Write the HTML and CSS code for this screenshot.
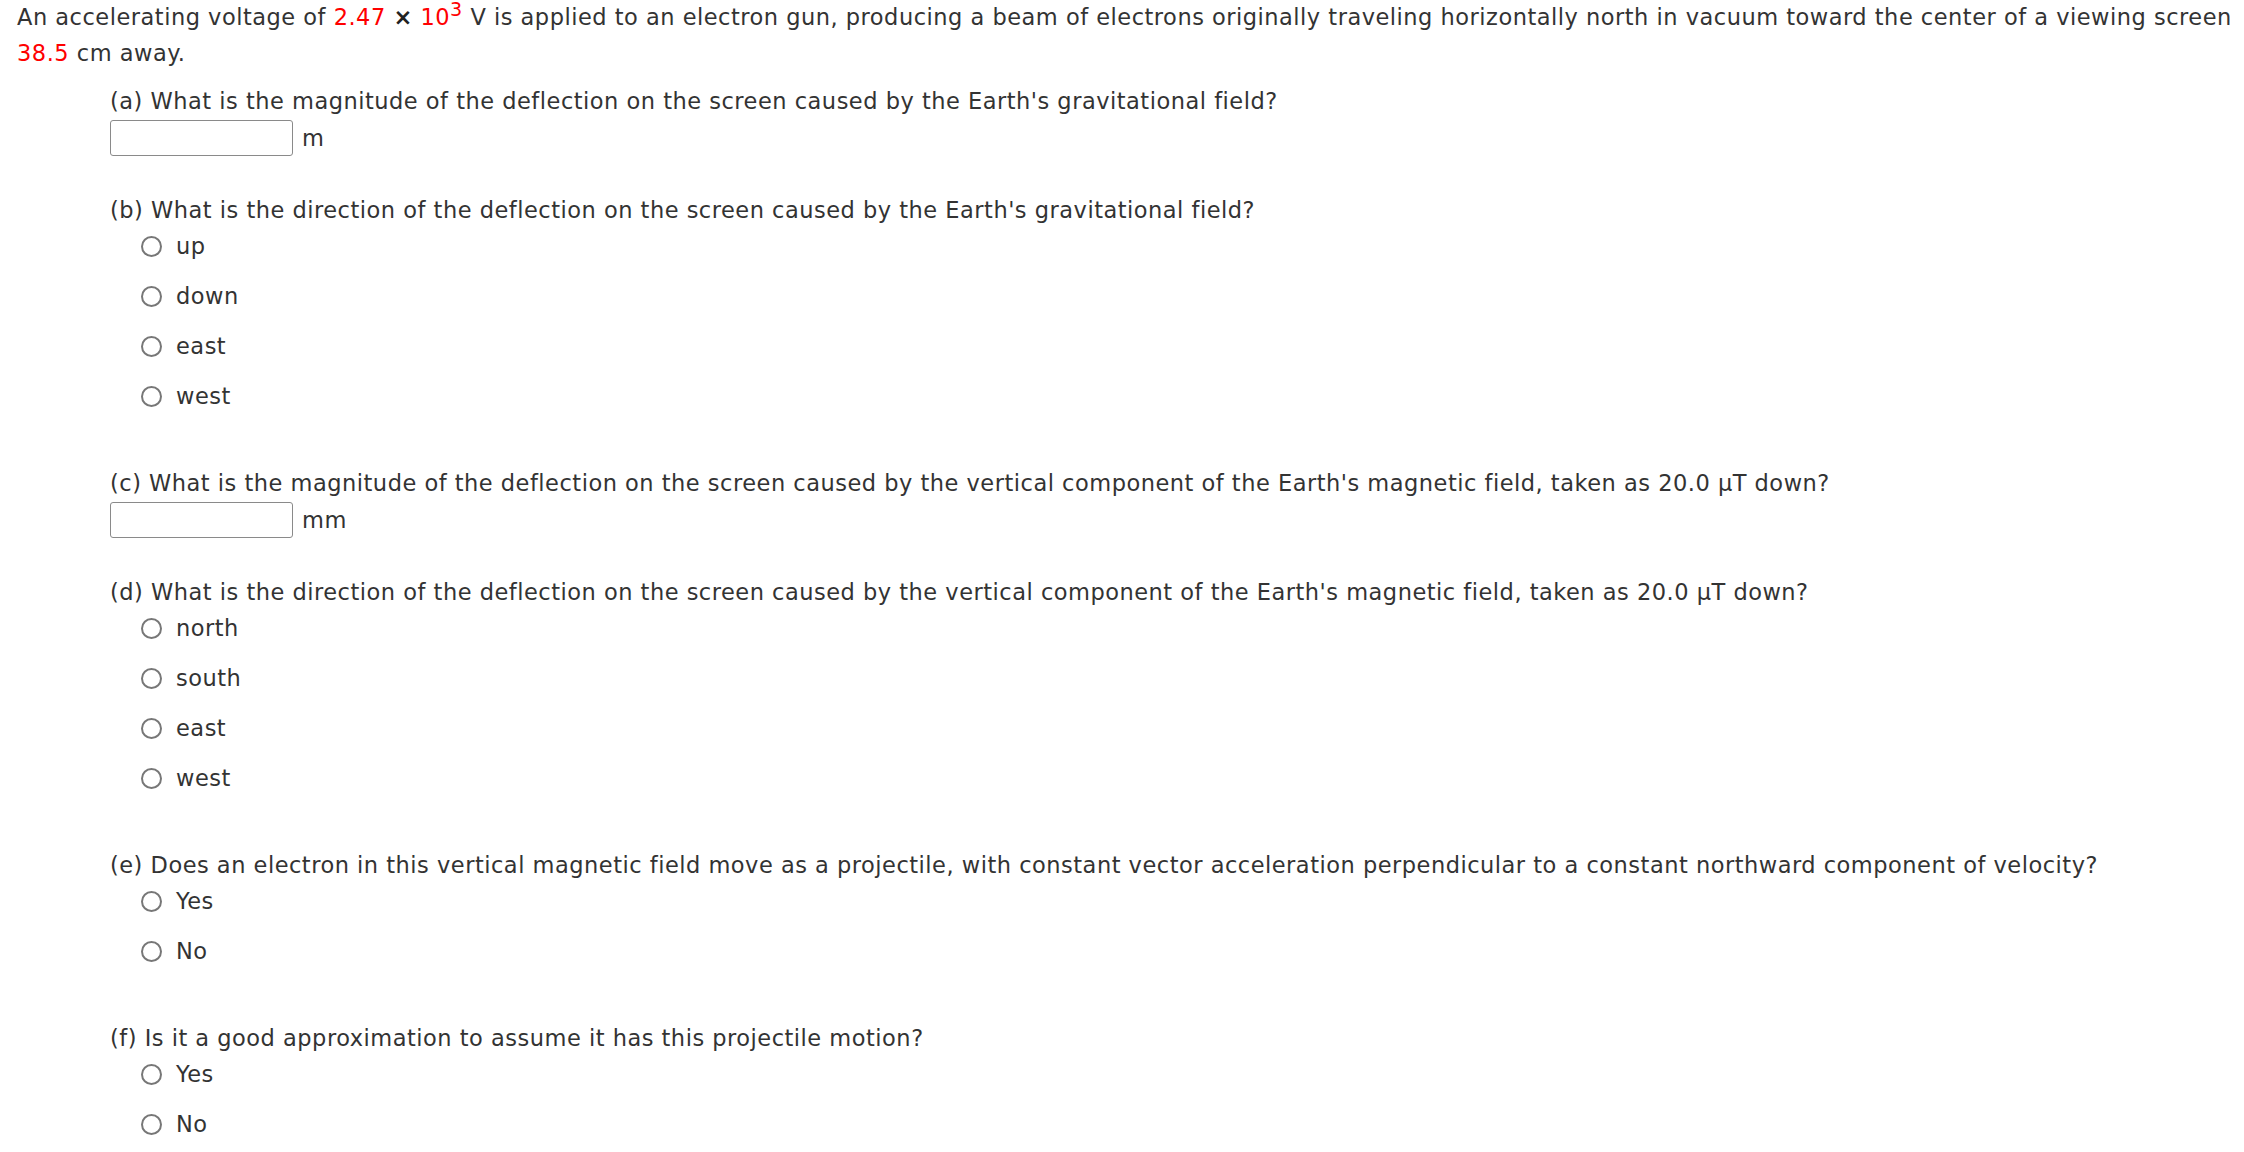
FILE: index.html
```html
<!DOCTYPE html>
<html>
<head>
<meta charset="utf-8">
<link rel="stylesheet" href="styles.css">
</head>
<body>
<div class="page">
  <p class="intro">An accelerating voltage of <span class="red">2.47</span> <span class="times">&times;</span> <span class="red">10<sup>3</sup></span> V is applied to an electron gun, producing a beam of electrons originally traveling horizontally north in vacuum toward the center of a viewing screen <span class="red">38.5</span> cm away.</p>

  <div class="parts">
    <div class="part">
      <div class="q">(a) What is the magnitude of the deflection on the screen caused by the Earth's gravitational field?</div>
      <div class="answer"><span class="box"></span><span class="unit">m</span></div>
    </div>

    <div class="part">
      <div class="q">(b) What is the direction of the deflection on the screen caused by the Earth's gravitational field?</div>
      <div class="options">
        <div class="opt"><span class="radio"></span><span>up</span></div>
        <div class="opt"><span class="radio"></span><span>down</span></div>
        <div class="opt"><span class="radio"></span><span>east</span></div>
        <div class="opt"><span class="radio"></span><span>west</span></div>
      </div>
    </div>

    <div class="part">
      <div class="q">(c) What is the magnitude of the deflection on the screen caused by the vertical component of the Earth's magnetic field, taken as 20.0 &micro;T down?</div>
      <div class="answer"><span class="box"></span><span class="unit">mm</span></div>
    </div>

    <div class="part">
      <div class="q">(d) What is the direction of the deflection on the screen caused by the vertical component of the Earth's magnetic field, taken as 20.0 &micro;T down?</div>
      <div class="options">
        <div class="opt"><span class="radio"></span><span>north</span></div>
        <div class="opt"><span class="radio"></span><span>south</span></div>
        <div class="opt"><span class="radio"></span><span>east</span></div>
        <div class="opt"><span class="radio"></span><span>west</span></div>
      </div>
    </div>

    <div class="part">
      <div class="q">(e) Does an electron in this vertical magnetic field move as a projectile, with constant vector acceleration perpendicular to a constant northward component of velocity?</div>
      <div class="options">
        <div class="opt"><span class="radio"></span><span>Yes</span></div>
        <div class="opt"><span class="radio"></span><span>No</span></div>
      </div>
    </div>

    <div class="part">
      <div class="q">(f) Is it a good approximation to assume it has this projectile motion?</div>
      <div class="options">
        <div class="opt"><span class="radio"></span><span>Yes</span></div>
        <div class="opt"><span class="radio"></span><span>No</span></div>
      </div>
    </div>
  </div>
</div>
</body>
</html>
```

FILE: styles.css
```css
html, body {
  margin: 0;
  padding: 0;
  background: #ffffff;
}
body {
  font-family: "DejaVu Sans", Verdana, sans-serif;
  font-size: 22.5px;
  letter-spacing: 0.5px;
  color: #333333;
}
.page {
  padding: 0 8px 0 17px;
}
.intro {
  margin: -1px 0 0 0;
  line-height: 36px;
}
.red {
  color: #ff0000;
}
.times {
  font-weight: bold;
  color: #222;
}
sup {
  font-size: 0.85em;
  line-height: 0;
  vertical-align: 0.45em;
}
.parts {
  padding-left: 93px;
  margin-top: 12px;
  display: flex;
  flex-direction: column;
}
.part + .part {
  margin-top: 36px;
}
.part:has(.options) + .part {
  margin-top: 51px;
}
.q {
  line-height: 36px;
}
.answer {
  display: flex;
  align-items: center;
  gap: 9px;
  margin-top: 1px;
}
.box {
  display: inline-block;
  width: 181px;
  height: 34px;
  border: 1px solid #8a8a8a;
  border-radius: 3px;
  background: #fff;
}
.unit {
  line-height: 36px;
}
.options {
  display: flex;
  flex-direction: column;
  gap: 14px;
  padding-left: 31px;
}
.opt {
  display: flex;
  align-items: center;
  gap: 14px;
  height: 36px;
}
.radio {
  width: 17px;
  height: 17px;
  border: 2px solid #777777;
  border-radius: 50%;
  flex: none;
  background: #fff;
}
```
